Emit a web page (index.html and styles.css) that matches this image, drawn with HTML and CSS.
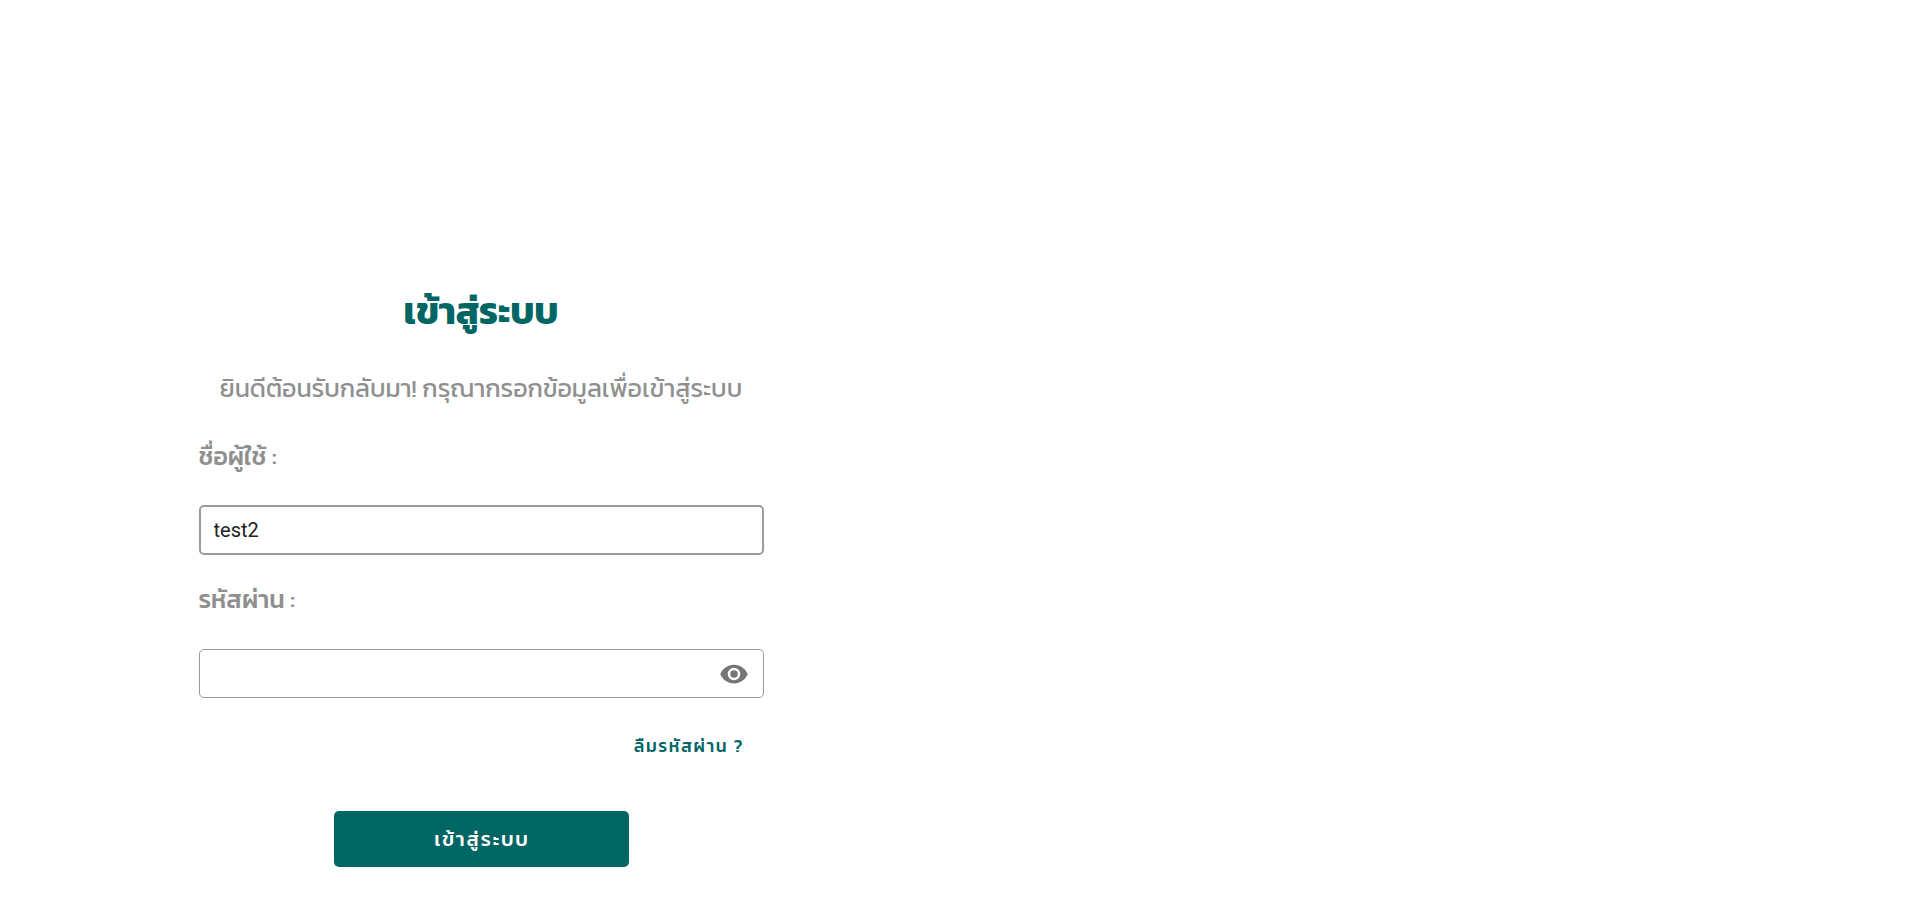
FILE: index.html
```html
<!DOCTYPE html>
<html lang="th">
<head>
<meta charset="utf-8">
<title>เข้าสู่ระบบ</title>
<link rel="stylesheet" href="styles.css">
</head>
<body>
<main class="login">
  <h1 class="title">เข้าสู่ระบบ</h1>
  <p class="subtitle">ยินดีต้อนรับกลับมา! กรุณากรอกข้อมูลเพื่อเข้าสู่ระบบ</p>
  <label class="label" for="user">ชื่อผู้ใช้ :</label>
  <div class="field field-hover"><input id="user" class="input" type="text" value="test2"></div>
  <label class="label label-password" for="pass">รหัสผ่าน :</label>
  <div class="field field-password"><input id="pass" class="input" type="password">
    <svg class="eye" viewBox="0 0 24 24"><path d="M12 9a3 3 0 0 0-3 3 3 3 0 0 0 3 3 3 3 0 0 0 3-3 3 3 0 0 0-3-3m0 8a5 5 0 0 1-5-5 5 5 0 0 1 5-5 5 5 0 0 1 5 5 5 5 0 0 1-5 5m0-12.500C7 4.500 2.730 7.610 1 12c1.730 4.390 6 7.500 11 7.500s9.270-3.110 11-7.500c-1.730-4.390-6-7.500-11-7.500z"/></svg>
  </div>
  <a class="forgot" href="#">ลืมรหัสผ่าน ?</a>
  <button class="submit" type="button">เข้าสู่ระบบ</button>
</main>
</body>
</html>
```
FILE: styles.css
```css
* { box-sizing: border-box; }
body { margin: 0; background: #fff; font-family: Kanit, "Noto Sans Thai", Roboto, sans-serif; }
.login { width: 565px; margin-left: 199px; padding-top: 279px; display: flex; flex-direction: column; }
.title { margin: 0 1px 0 0; height: 64px; line-height: 64px; text-align: center; font-size: 37.5px; font-weight: 700; color: #006664; }
.subtitle { margin: 20px 1px 0 0; height: 50px; line-height: 50px; text-align: center; font-size: 25px; color: #8f8f8f; white-space: nowrap; }
.label { height: 50px; line-height: 50px; margin: 18px 0 0 -0.5px; font-size: 25px; font-weight: 500; color: #8f8f8f; }
.label-password { margin-top: 19px; }
.field { display: flex; align-items: center; height: 50px; margin-top: 24px; border: 1px solid #9b9b9b; border-radius: 5px; padding: 0 14.5px 0 14px; }
.field-hover { border: 2px solid #9b9b9b; padding-left: 12.5px; }
.field-password { height: 49px; margin-top: 25px; }
.input { flex: 1; min-width: 0; border: 0; outline: 0; padding: 0; background: transparent; font: 20px Roboto, sans-serif; color: #212121; }
.eye { width: 30px; height: 30px; fill: #757575; }
.forgot { align-self: flex-end; margin: 23px 20px 0 0; height: 50px; line-height: 50px; font-size: 17.5px; font-weight: 500; letter-spacing: 1.6px; color: #006664; text-decoration: none; }
.submit { align-self: center; width: 295px; height: 56px; margin-top: 40px; border: 0; border-radius: 5px; background: #006664; color: #fff; font: 500 20px Kanit, "Noto Sans Thai", Roboto, sans-serif; letter-spacing: 1.79px; padding: 0 0 0 1px; }
```
